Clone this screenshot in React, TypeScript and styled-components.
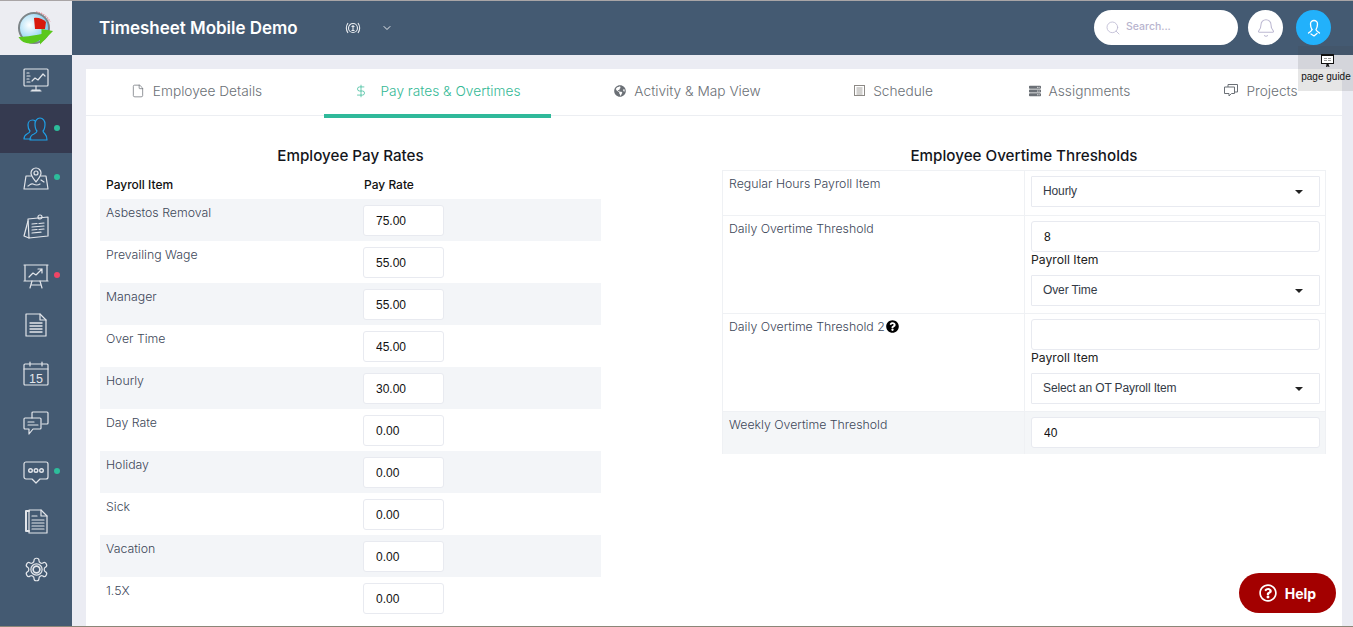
import { ReactNode } from "react";
import styled, { createGlobalStyle } from "styled-components";
import { Bell, ChevronDown, DollarSign, File, Search } from "lucide-react";
import { FaGlobeAmericas, FaQuestionCircle, FaRegQuestionCircle, FaServer } from "react-icons/fa";

const GlobalStyle = createGlobalStyle`
    html, body {
        margin: 0;
        padding: 0;
        height: 100%;
        overflow: hidden;
        background: #ebecf3;
    }
    * {
        box-sizing: border-box;
    }
`;

const uiFont = `Inter, "Open Sans", sans-serif`;
const formFont = `"Liberation Sans", Arial, sans-serif`;

const Shell = styled.div`
    position: relative;
    display: grid;
    grid-template-columns: 72px 1fr;
    width: 1353px;
    height: 627px;
    overflow: hidden;
    border-top: 1px solid #a9a5a6;
    border-bottom: 1px solid #8b8678;
    font-family: ${uiFont};
`;

const Sidebar = styled.nav`
    display: flex;
    flex-direction: column;
    background: #445a72;
`;

const LogoBox = styled.div`
    display: flex;
    justify-content: center;
    align-items: center;
    height: 54px;
    background: #ecedf2;
`;

const NavItem = styled.div<{ $active?: boolean }>`
    position: relative;
    display: flex;
    justify-content: center;
    align-items: center;
    height: 49px;
    background: ${({ $active }) => ($active ? "#353a50" : "transparent")};
    color: ${({ $active }) => ($active ? "#1f9fe6" : "#e2e5ea")};

    svg {
        display: block;
    }
`;

const NavDot = styled.span<{ $color: string }>`
    position: absolute;
    left: 54px;
    top: 21px;
    width: 6px;
    height: 6px;
    border-radius: 50%;
    background: ${({ $color }) => $color};
`;

const Main = styled.div`
    display: flex;
    flex-direction: column;
    min-width: 0;
`;

const Header = styled.header`
    display: flex;
    align-items: center;
    flex: 0 0 54px;
    padding: 0 22px 1px 27px;
    background: #445a72;
    color: #fff;
`;

const Title = styled.div`
    width: 246px;
    font-size: 17px;
    font-weight: 600;
    letter-spacing: -0.02px;
    white-space: nowrap;
`;

const Currency = styled.div`
    display: flex;
    align-items: center;
    gap: 20px;
    color: #e8ebef;
`;

const HeaderRight = styled.div`
    display: flex;
    align-items: center;
    margin-left: auto;
`;

const SearchBox = styled.label`
    display: flex;
    align-items: center;
    gap: 5px;
    width: 144px;
    height: 35px;
    padding: 0 11px;
    border-radius: 18px;
    background: #fff;
    color: #bdb9d2;
`;

const SearchInput = styled.input`
    width: 90px;
    border: 0;
    outline: 0;
    padding: 0 0 2px;
    font-family: ${uiFont};
    font-size: 10.5px;
    font-weight: 500;
    background: transparent;

    &::placeholder {
        color: #b8b4ce;
        opacity: 1;
    }
`;

const RoundButton = styled.div<{ $blue?: boolean }>`
    display: flex;
    justify-content: center;
    align-items: center;
    width: 35px;
    height: 35px;
    margin-left: ${({ $blue }) => ($blue ? "13px" : "10px")};
    border-radius: 50%;
    background: ${({ $blue }) => ($blue ? "#22b1fb" : "#fff")};
    color: ${({ $blue }) => ($blue ? "#fff" : "#bdb9d2")};
`;

const Content = styled.div`
    flex: 1;
    min-height: 0;
    padding: 14px 11px 0 14px;
    background: #ebecf3;
`;

const Card = styled.main`
    height: 100%;
    background: #fff;
`;

const Tabs = styled.div`
    display: flex;
    height: 47px;
    border-bottom: 1px solid #eceef2;
`;

const Tab = styled.div<{ $width: number; $active?: boolean }>`
    display: flex;
    justify-content: center;
    align-items: center;
    gap: ${({ $active }) => ($active ? "12px" : "8px")};
    flex: 0 0 ${({ $width }) => $width}px;
    height: ${({ $active }) => ($active ? "49px" : "46px")};
    margin-left: ${({ $active }) => ($active ? "17px" : "0")};
    padding-bottom: ${({ $active }) => ($active ? "2px" : "3px")};
    font-size: 13.700px;
    font-weight: 300;
    white-space: nowrap;
    color: ${({ $active }) => ($active ? "#35b996" : "#6b7076")};
    border-bottom: ${({ $active }) => ($active ? "4px solid #2fb99a" : "0")};
`;

const Panels = styled.div`
    display: flex;
    justify-content: space-between;
    padding: 30px 16px 0 14px;
`;

const PayPanel = styled.section`
    width: 501px;
`;

const OvertimePanel = styled.section`
    width: 604px;
`;

const SectionTitle = styled.h2`
    margin: 0;
    height: 20px;
    font-size: 15.200px;
    line-height: 20px;
    font-weight: 500;
    text-align: center;
    color: #14161c;
`;

const PayHeader = styled.div`
    display: grid;
    grid-template-columns: 258px 1fr;
    height: 33px;
    padding: 11px 0 0 6px;
    font-size: 12px;
    line-height: 16px;
    font-weight: 500;
    color: #111;
`;

const PayRow = styled.div<{ $striped: boolean }>`
    display: grid;
    grid-template-columns: 257px 1fr;
    height: 42px;
    padding: 6px 0 0 6px;
    background: ${({ $striped }) => ($striped ? "#f3f5f8" : "#fff")};
`;

const RowLabel = styled.div`
    font-size: 12.300px;
    line-height: 16px;
    font-weight: 300;
    color: #3d4759;
`;

const Field = styled.input<{ $narrow?: boolean }>`
    display: block;
    width: ${({ $narrow }) => ($narrow ? "81px" : "289px")};
    height: 31px;
    padding: 0 12px;
    border: 1px solid #e8eaf0;
    border-radius: 3px;
    outline: 0;
    background: #fff;
    color: #111;
    font-family: ${formFont};
    font-size: 12px;
`;

const SelectBox = styled.div`
    position: relative;
    display: flex;
    align-items: center;
    width: 289px;
    height: 31px;
    padding: 0 11px 2px;
    border: 1px solid #e8eaf0;
    border-radius: 1px;
    background: #fff;
    color: #333a46;
    font-family: ${formFont};
    font-size: 12px;
    letter-spacing: -0.12px;

    &::after {
        content: "";
        position: absolute;
        right: 16px;
        top: 13px;
        border-style: solid;
        border-width: 4px 4.500px 0;
        border-color: #222 transparent transparent;
    }
`;

const ThresholdTable = styled.div`
    margin-top: 4px;
    border-left: 1px solid #eff1f4;
    border-right: 1px solid #eff1f4;
`;

const ThresholdRow = styled.div<{ $height: number; $striped?: boolean }>`
    display: grid;
    grid-template-columns: 302px 1fr;
    height: ${({ $height }) => $height}px;
    border-top: 1px solid #eff1f4;
    background: ${({ $striped }) => ($striped ? "#f4f6f8" : "#fff")};
`;

const ThresholdLabel = styled(RowLabel)`
    display: flex;
    align-items: flex-start;
    gap: 1px;
    padding: 5px 0 0 6px;
    border-right: 1px solid #eff1f4;

    svg {
        margin-top: 1px;
        color: #000;
    }
`;

const ThresholdValue = styled.div`
    padding: 5px 0 0 6px;
`;

const FieldCaption = styled.div`
    height: 23px;
    font-size: 12.200px;
    line-height: 16px;
    font-weight: 400;
    color: #222;
`;

const PageGuide = styled.div`
    position: absolute;
    top: 45px;
    right: 0;
    width: 55px;
    height: 45px;
    padding: 8px 0 0 1px;
    background: rgba(60, 60, 60, 0.13);
    color: #111;
    font-family: ${formFont};
    font-size: 10px;
    line-height: 12px;
    text-align: center;
    white-space: nowrap;

    svg {
        display: block;
        margin: 0 auto 4px 22px;
    }
`;

const HelpButton = styled.button`
    position: absolute;
    top: 572px;
    left: 1239px;
    display: flex;
    justify-content: center;
    align-items: center;
    gap: 8px;
    width: 97px;
    height: 40px;
    border: 0;
    border-radius: 20px;
    background: #a30000;
    color: #fff;
    font-family: ${uiFont};
    font-size: 14px;
    font-weight: 700;
`;

const Glyph = ({ children, size = 26 }: { children: ReactNode; size?: number }) => (
    <svg
        width={size}
        height={size}
        viewBox="0 0 26 26"
        fill="none"
        stroke="currentColor"
        strokeWidth="1.2"
        strokeLinecap="round"
        strokeLinejoin="round"
    >
        {children}
    </svg>
);

const AppLogo = () => (
    <svg width="40" height="36" viewBox="16 9 40 36">
        <defs>
            <radialGradient id="dial" cx="0.35" cy="0.4" r="0.7">
                <stop offset="0" stopColor="#ffffff" />
                <stop offset="1" stopColor="#6cc6ee" />
            </radialGradient>
        </defs>
        <path d="M36 11a17 17 0 0 1 14 10" fill="none" stroke="#e79aa6" strokeWidth="1.500" strokeDasharray="1.500 1" />
        <path d="M36 14a14 14 0 0 1 11 8" fill="none" stroke="#e79aa6" strokeWidth="1.500" strokeDasharray="1.500 1" />
        <circle cx="34" cy="27" r="15" fill="url(#dial)" stroke="#7d8588" strokeWidth="2" />
        <path d="M34 17 35 28H45L46 21C43 18 38 16 34 17z" fill="#d81a0c" />
        <path d="M18.500 36C24 36 32 35 41.500 33V28L53 30 40 43.500V39C33 44 23 44 18.500 36z" fill="#5ac81c" />
    </svg>
);

const MonitorIcon = () => (
    <Glyph>
        <rect x="1" y="2" width="24" height="17" rx="1" />
        <path d="M13 19v3M8 24h10M9 23h8" />
        <path d="M9 14l3-3 3 2 5-6 2 2" />
        <path d="M4 6h2M4 9h3M4 12h2M4 15h3" />
    </Glyph>
);

const UsersIcon = () => (
    <Glyph>
        <path d="M8 23H1c0-3 1-4 3-5s3-2 3-3c-1-1-2-3-2-6 0-3 2-5 4.500-5 1 0 2 .3 2.700 1" />
        <path d="M7 24c0-3 1-5 4-6 2-1 3-2 3-3-1-1-2-3-2-7 0-3 2-6 5-6s5 3 5 6c0 4-1 6-2 7 0 1 1 2 2 3s2 3 2 6z" />
    </Glyph>
);

const MapIcon = () => (
    <Glyph>
        <path d="M8 11H3L1 24h24l-2-13h-5" />
        <path d="M13 17c-3-4-5-6-5-9a5 5 0 0 1 10 0c0 3-2 5-5 9z" />
        <circle cx="13" cy="8" r="2" />
        <path d="M5 21c2-1 3-3 5-2s4 2 7 0M18 15l3 2" />
    </Glyph>
);

const NotesIcon = () => (
    <Glyph>
        <path d="M5 5l20-2 0 19-19 2z" />
        <path d="M5 7 1 22l5 2" />
        <circle cx="17" cy="3" r="2" />
        <path d="M9 10l5-.5M16 9.500l5-.5M9 13l12-1M9 16l5-.5M16 15.500l5-.5M9 19l9-.8" />
    </Glyph>
);

const BoardIcon = () => (
    <Glyph>
        <path d="M1 2h24M2 2v16h22V2M1 18h24" />
        <path d="M6 14l4-4 3 2 6-6M15 6h4v4" />
        <path d="M9 18l-2 7M17 18l2 7M8 22h10" />
    </Glyph>
);

const DocIcon = () => (
    <Glyph>
        <path d="M3 2h14l6 6v16H3z" />
        <path d="M17 2v6h6" />
        <path d="M7 11h12M7 14h12M7 17h12M7 20h12" strokeWidth="1.400" />
    </Glyph>
);

const CalendarIcon = () => (
    <Glyph>
        <rect x="1" y="3" width="24" height="21" rx="1" />
        <path d="M1 8h24M7 1v4M19 1v4" />
        <text x="13" y="21.500" fontSize="12.500" textAnchor="middle" fill="currentColor" stroke="none" fontFamily={formFont}>15</text>
    </Glyph>
);

const ChatsIcon = () => (
    <Glyph>
        <path d="M9 8V3a1 1 0 0 1 1-1h14a1 1 0 0 1 1 1v10a1 1 0 0 1-1 1h-5" />
        <path d="M2 8h15a1 1 0 0 1 1 1v9a1 1 0 0 1-1 1H10l-4 5v-5H2a1 1 0 0 1-1-1V9a1 1 0 0 1 1-1z" />
        <path d="M5 12h6M5 15h10" />
    </Glyph>
);

const BubbleIcon = () => (
    <Glyph>
        <path d="M3 3h20a2 2 0 0 1 2 2v13a2 2 0 0 1-2 2h-6l-4 4-4-4H3a2 2 0 0 1-2-2V5a2 2 0 0 1 2-2z" />
        <circle cx="7.500" cy="11.500" r="1.800" strokeWidth="1.400" />
        <circle cx="13" cy="11.500" r="1.800" strokeWidth="1.400" />
        <circle cx="18.500" cy="11.500" r="1.800" strokeWidth="1.400" />
    </Glyph>
);

const ReportIcon = () => (
    <Glyph>
        <path d="M6 3H3v20h3" strokeWidth="2" />
        <path d="M6 2h12l6 6v17H6z" />
        <path d="M18 2v6h6M9 8h5M9 12h12M9 15h12M9 18h12M9 21h12" />
    </Glyph>
);

const GearIcon = () => (
    <svg width="27" height="27" viewBox="0 0 24 24" fill="none" stroke="currentColor" strokeWidth="1.100">
        <path d="M12.220 2h-.44a2 2 0 0 0-2 2v.18a2 2 0 0 1-1 1.730l-.43.25a2 2 0 0 1-2 0l-.15-.08a2 2 0 0 0-2.730.73l-.22.38a2 2 0 0 0 .73 2.730l.15.1a2 2 0 0 1 1 1.720v.51a2 2 0 0 1-1 1.740l-.15.09a2 2 0 0 0-.73 2.730l.22.38a2 2 0 0 0 2.730.73l.15-.08a2 2 0 0 1 2 0l.43.25a2 2 0 0 1 1 1.730V20a2 2 0 0 0 2 2h.44a2 2 0 0 0 2-2v-.18a2 2 0 0 1 1-1.730l.43-.25a2 2 0 0 1 2 0l.15.08a2 2 0 0 0 2.730-.73l.22-.39a2 2 0 0 0-.73-2.730l-.15-.08a2 2 0 0 1-1-1.740v-.5a2 2 0 0 1 1-1.740l.15-.09a2 2 0 0 0 .73-2.730l-.22-.38a2 2 0 0 0-2.730-.73l-.15.08a2 2 0 0 1-2 0l-.43-.25a2 2 0 0 1-1-1.730V4a2 2 0 0 0-2-2z" />
        <circle cx="12" cy="12" r="5" />
        <circle cx="12" cy="12" r="3" strokeWidth="1.500" />
    </svg>
);

const MoneyIcon = () => (
    <svg width="16" height="14" viewBox="0 0 16 14" fill="none" stroke="currentColor" strokeWidth="1.100">
        <circle cx="8" cy="7" r="4.500" />
        <path d="M3 2C1 5 1 9 3 12M13 2c2 3 2 7 0 10" />
        <path d="M8 4v6M6.500 9.500h3M6.500 5.500h3" />
    </svg>
);

const UserIcon = () => (
    <svg width="20" height="20" viewBox="0 0 20 20" fill="none" stroke="currentColor" strokeWidth="1.300" strokeLinecap="round">
        <path d="M8 11.500C7 10 6.500 8 6.500 6a3.500 3.500 0 0 1 7 0c0 2-.5 4-1.500 5.500 0 1.500 2 2 3.500 3.500" />
        <path d="M8 11.500c0 1.500-2 2-3.500 3.500" />
        <path d="M7 16l3 2 3-2.500" />
    </svg>
);

const ScheduleIcon = () => (
    <svg width="11" height="11" viewBox="0 0 11 11" fill="none" stroke="#8d8a86">
        <rect x=".5" y=".5" width="10" height="10" />
        <path d="M2.500 3h6M2.500 5h6M2.500 7h6M2.500 9h6" strokeWidth=".8" />
    </svg>
);

const ProjectsIcon = () => (
    <svg width="14" height="13" viewBox="0 0 14 13" fill="none" stroke="currentColor" strokeWidth="1">
        <path d="M4 3V.5h9.500v7.500H10.500" />
        <path d="M.5 3h10v6.500H7.500L5 12V9.500H.5z" />
    </svg>
);

const GuideIcon = () => (
    <svg width="13" height="13" viewBox="0 0 13 13">
        <rect x=".5" y=".5" width="12" height="9" fill="#fff" stroke="#111" />
        <path d="M0 0h13v2H0zM5.500 10h2l1 3h-1l-.6-1.500-.6 1.500h-1.200z" fill="#111" />
        <path d="M3 4h3v1H3zM7 4h3v1H7zM3 6h3v1H3zM7 6h3v1H7z" fill="#999" />
    </svg>
);

const navItems = [
    { icon: <MonitorIcon /> },
    { icon: <UsersIcon />, active: true, dot: "#2dbd9b" },
    { icon: <MapIcon />, dot: "#2dbd9b" },
    { icon: <NotesIcon /> },
    { icon: <BoardIcon />, dot: "#ef4565" },
    { icon: <DocIcon /> },
    { icon: <CalendarIcon /> },
    { icon: <ChatsIcon /> },
    { icon: <BubbleIcon />, dot: "#2dbd9b" },
    { icon: <ReportIcon /> },
    { icon: <GearIcon /> },
];

const tabs = [
    { label: "Employee Details", width: 221, icon: <File size={14} strokeWidth={1.25} /> },
    { label: "Pay rates & Overtimes", width: 227, active: true, icon: <DollarSign size={14} strokeWidth={1.25} /> },
    { label: "Activity & Map View", width: 273, icon: <FaGlobeAmericas size={12} /> },
    { label: "Schedule", width: 139, icon: <ScheduleIcon /> },
    { label: "Assignments", width: 233, icon: <FaServer size={12} /> },
    { label: "Projects", width: 130, icon: <ProjectsIcon /> },
];

const payRates = [
    { name: "Asbestos Removal", rate: "75.00" },
    { name: "Prevailing Wage", rate: "55.00" },
    { name: "Manager", rate: "55.00" },
    { name: "Over Time", rate: "45.00" },
    { name: "Hourly", rate: "30.00" },
    { name: "Day Rate", rate: "0.00" },
    { name: "Holiday", rate: "0.00" },
    { name: "Sick", rate: "0.00" },
    { name: "Vacation", rate: "0.00" },
    { name: "1.5X", rate: "0.00" },
];

export default function App() {
    return (
        <Shell>
            <GlobalStyle />
            <Sidebar>
                <LogoBox>
                    <AppLogo />
                </LogoBox>
                {navItems.map((item, i) => (
                    <NavItem key={i} $active={item.active}>
                        {item.icon}
                        {item.dot && <NavDot $color={item.dot} />}
                    </NavItem>
                ))}
            </Sidebar>
            <Main>
                <Header>
                    <Title>Timesheet Mobile Demo</Title>
                    <Currency>
                        <MoneyIcon />
                        <ChevronDown size={12} />
                    </Currency>
                    <HeaderRight>
                        <SearchBox>
                            <Search size={16} strokeWidth={1.25} />
                            <SearchInput placeholder="Search..." />
                        </SearchBox>
                        <RoundButton>
                            <Bell size={20} strokeWidth={1.25} />
                        </RoundButton>
                        <RoundButton $blue>
                            <UserIcon />
                        </RoundButton>
                    </HeaderRight>
                </Header>
                <Content>
                    <Card>
                        <Tabs>
                            {tabs.map((tab) => (
                                <Tab key={tab.label} $width={tab.width} $active={tab.active}>
                                    {tab.icon}
                                    {tab.label}
                                </Tab>
                            ))}
                        </Tabs>
                        <Panels>
                            <PayPanel>
                                <SectionTitle>Employee Pay Rates</SectionTitle>
                                <PayHeader>
                                    <div>Payroll Item</div>
                                    <div>Pay Rate</div>
                                </PayHeader>
                                {payRates.map((row, i) => (
                                    <PayRow key={row.name} $striped={i % 2 === 0}>
                                        <RowLabel>{row.name}</RowLabel>
                                        <Field $narrow defaultValue={row.rate} />
                                    </PayRow>
                                ))}
                            </PayPanel>
                            <OvertimePanel>
                                <SectionTitle>Employee Overtime Thresholds</SectionTitle>
                                <ThresholdTable>
                                    <ThresholdRow $height={45}>
                                        <ThresholdLabel>Regular Hours Payroll Item</ThresholdLabel>
                                        <ThresholdValue>
                                            <SelectBox>Hourly</SelectBox>
                                        </ThresholdValue>
                                    </ThresholdRow>
                                    <ThresholdRow $height={98}>
                                        <ThresholdLabel>Daily Overtime Threshold</ThresholdLabel>
                                        <ThresholdValue>
                                            <Field defaultValue="8" />
                                            <FieldCaption>Payroll Item</FieldCaption>
                                            <SelectBox>Over Time</SelectBox>
                                        </ThresholdValue>
                                    </ThresholdRow>
                                    <ThresholdRow $height={98}>
                                        <ThresholdLabel>
                                            Daily Overtime Threshold 2
                                            <FaQuestionCircle size={13} />
                                        </ThresholdLabel>
                                        <ThresholdValue>
                                            <Field />
                                            <FieldCaption>Payroll Item</FieldCaption>
                                            <SelectBox>Select an OT Payroll Item</SelectBox>
                                        </ThresholdValue>
                                    </ThresholdRow>
                                    <ThresholdRow $height={43} $striped>
                                        <ThresholdLabel>Weekly Overtime Threshold</ThresholdLabel>
                                        <ThresholdValue>
                                            <Field defaultValue="40" />
                                        </ThresholdValue>
                                    </ThresholdRow>
                                </ThresholdTable>
                            </OvertimePanel>
                        </Panels>
                    </Card>
                </Content>
            </Main>
            <PageGuide>
                <GuideIcon />
                page guide
            </PageGuide>
            <HelpButton>
                <FaRegQuestionCircle size={18} />
                Help
            </HelpButton>
        </Shell>
    );
}
